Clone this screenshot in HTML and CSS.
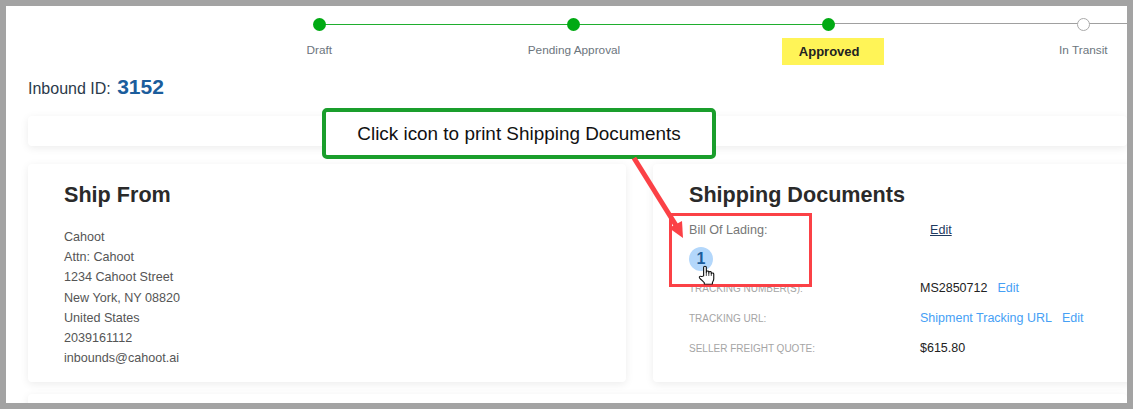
FILE: index.html
```html
<!DOCTYPE html>
<html lang="en">
<head>
<meta charset="utf-8">
<title>Inbound 3152</title>
<link rel="stylesheet" href="styles.css">
</head>
<body>
<div class="frame">
  <div class="stepper">
    <div class="step done"><span class="dot"></span><span class="label">Draft</span></div>
    <div class="step done"><span class="dot"></span><span class="label">Pending Approval</span></div>
    <div class="step current"><span class="dot"></span><span class="label active">Approved</span></div>
    <div class="step todo"><span class="dot"></span><span class="label">In Transit</span></div>
  </div>
  <div class="inbound">Inbound ID: <strong>3152</strong></div>
  <div class="card strip"></div>
  <div class="columns">
    <section class="card from">
      <h2>Ship From</h2>
      <address>
        <div>Cahoot</div>
        <div>Attn: Cahoot</div>
        <div>1234 Cahoot Street</div>
        <div>New York, NY 08820</div>
        <div>United States</div>
        <div>2039161112</div>
        <div>inbounds@cahoot.ai</div>
      </address>
    </section>
    <section class="card docs">
      <h2>Shipping Documents</h2>
      <div class="bol">
        <span class="bol-label">Bill Of Lading:</span>
        <a class="bol-edit">Edit</a>
      </div>
      <div class="doc-circle">1</div>
      <div class="row"><span class="key">TRACKING NUMBER(S):</span><span class="val">MS2850712</span><a class="link gap">Edit</a></div>
      <div class="row"><span class="key">TRACKING URL:</span><a class="link">Shipment Tracking URL</a><a class="link gap">Edit</a></div>
      <div class="row"><span class="key">SELLER FREIGHT QUOTE:</span><span class="val">$615.80</span></div>
    </section>
  </div>
  <div class="card next"></div>

  <div class="callout">Click icon to print Shipping Documents</div>
  <div class="redbox"></div>
  <svg class="arrow" width="70" height="95" viewBox="0 0 70 95">
    <line x1="4" y1="3" x2="47" y2="72" stroke="#fb4146" stroke-width="5"/>
    <polygon points="53,83 39,73 52,66" fill="#fb4146"/>
  </svg>
  <svg class="hand" width="18" height="20" viewBox="0 0 16 22" preserveAspectRatio="none">
    <path d="M5 12V2.6C5 1 7.4 1 7.4 2.6V8.5V7.6C7.4 6.2 9.6 6.2 9.6 7.6V9V8.2C9.6 6.9 11.8 6.9 11.8 8.2V9.6C11.8 8.5 14 8.5 14 9.8V15C14 17 13.2 18 12.8 19.6V21H5.6V19.6C4.4 17.6 2.8 16.4 1.4 14.2C.6 12.8 2.2 11.6 3.4 12.8Z" fill="#fff" stroke="#111" stroke-width="1" stroke-linejoin="round"/>
    <path d="M7.4 8.5V12M9.6 9V12M11.8 9.6V12" fill="none" stroke="#111" stroke-width=".8"/>
  </svg>
</div>
</body>
</html>
```
FILE: styles.css
```css
* { box-sizing: border-box; }
html, body { margin: 0; padding: 0; }
body { font-family: "Liberation Sans", Arial, sans-serif; background: #fff; color: #333; }
.frame {
  position: relative;
  width: 1133px;
  height: 409px;
  border: 6px solid #a3a3a3;
  background: #fff;
  overflow: hidden;
}
.stepper {
  display: grid;
  grid-template-columns: repeat(4, 254.67px);
  margin-left: 186px;
  height: 59px;
  padding-top: 12px;
}
.step {
  position: relative;
  display: flex;
  flex-direction: column;
  align-items: center;
}
.step::after {
  content: "";
  position: absolute;
  left: 50%;
  width: 100%;
  top: 6px;
  height: 1px;
  background: #1fae2e;
}
.current::after, .todo::after { background: #a0a0a0; top: 5px; }
.dot {
  position: relative;
  z-index: 1;
  width: 13px;
  height: 13px;
  border-radius: 50%;
  background: #00aa13;
}
.todo .dot { background: #fff; border: 1px solid #aaa; }
.label {
  margin-top: 12px;
  font-size: 11.8px;
  line-height: 14px;
  color: #6c757d;
  white-space: nowrap;
}
.label.active {
  margin-top: 7px;
  margin-left: 9px;
  padding: 7px 25px 6px 17px;
  background: #fff457;
  color: #222;
  font-weight: 700;
  font-size: 13px;
}
.inbound {
  margin: 9px 0 0 22px;
  font-size: 16px;
  line-height: 26px;
  height: 26px;
  color: #2b3a4a;
}
.inbound strong { font-size: 21px; color: #1b5d9c; margin-left: 2px; }
.card {
  background: #fff;
  border-radius: 4px;
  box-shadow: 0 2px 8px rgba(0, 0, 0, .08);
}
.strip { margin: 16px 0 0 22px; height: 30px; }
.columns {
  display: grid;
  grid-template-columns: 598px 480px;
  column-gap: 27px;
  margin: 18px 0 0 22px;
}
.from, .docs { height: 218px; }
.from { padding: 18px 0 0 36px; }
.docs { padding: 18px 0 0 36px; }
h2 {
  margin: 0;
  font-size: 21.6px;
  line-height: 26px;
  font-weight: 700;
  color: #2a2a2a;
}
address {
  margin-top: 19px;
  font-style: normal;
  font-size: 12.6px;
  line-height: 20.2px;
  color: #555;
}
.bol {
  display: flex;
  margin-top: 14px;
  font-size: 12.6px;
  line-height: 16px;
}
.bol-label { width: 241px; color: #777; }
.bol-edit { color: #1f3a5f; text-decoration: underline; }
.doc-circle {
  width: 24px;
  height: 24px;
  margin-top: 9px;
  border-radius: 50%;
  background: #b3d7fb;
  color: #1b5d9c;
  font-size: 16px;
  font-weight: 700;
  line-height: 24px;
  text-align: center;
}
.row {
  display: flex;
  align-items: center;
  height: 30px;
  font-size: 12.5px;
  color: #222;
}
.doc-circle + .row { margin-top: 2px; }
.key { width: 231px; font-size: 10px; color: #a5a5a5; }
.link { color: #46a0f5; }
.gap { margin-left: 10px; }
.next { margin: 12px 0 0 22px; height: 30px; }
.callout {
  position: absolute;
  left: 316px;
  top: 102px;
  width: 394px;
  height: 51px;
  padding-top: 1px;
  display: flex;
  align-items: center;
  justify-content: center;
  background: #fff;
  border: 4px solid #1a9e2c;
  border-radius: 5px;
  font-size: 18.9px;
  color: #111;
}
.redbox {
  position: absolute;
  left: 663px;
  top: 207px;
  width: 143px;
  height: 74px;
  border: 3.5px solid #fb4146;
}
.arrow { position: absolute; left: 624px; top: 149px; }
.hand { position: absolute; left: 692px; top: 259px; }
```
